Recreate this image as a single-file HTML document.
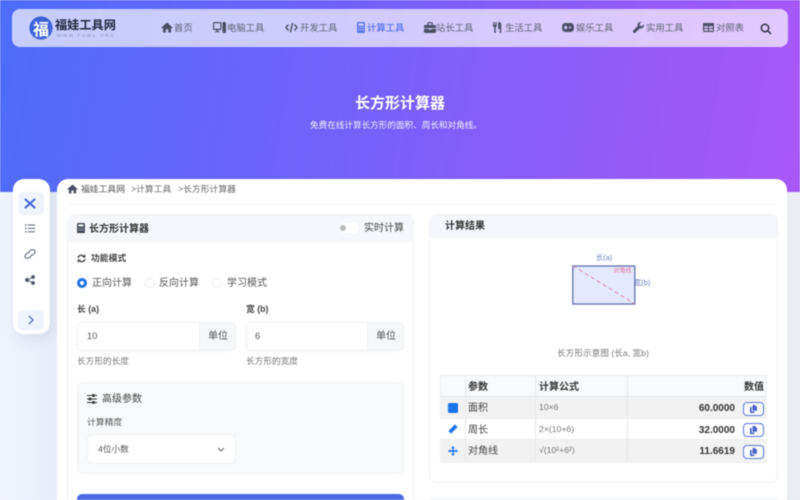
<!DOCTYPE html>
<html lang="zh-CN">
<head>
<meta charset="utf-8">
<title>长方形计算器</title>
<style>
*{box-sizing:border-box;margin:0;padding:0}
html,body{width:800px;height:500px;overflow:hidden;background:#edf1f9}
body{font-family:"Liberation Sans","Noto Sans CJK SC",sans-serif;color:#333}
#root{position:absolute;left:0;top:0;width:800px;height:500px;overflow:hidden;filter:blur(.4px);background:linear-gradient(90deg,#f1f4fd 0,#e8ecf6 60px,#e8ecf6 100%)}
.a{position:absolute}
.t{position:absolute;white-space:nowrap;line-height:1}
svg{position:absolute;display:block}
.n{font-size:9.33px;color:#5f6376;top:23.5px}
.nv{fill:#4b5065}
</style>
</head>
<body>
<div id="root">
<div class="a" style="left:0;top:0;width:800px;height:192px;background:linear-gradient(100deg,#4d6df8 0%,#7a60fb 50%,#a957f8 100%)"></div>
<div class="a" style="left:787px;top:192px;width:13px;height:308px;background:#e9edf2"></div>

<!-- nav -->
<div class="a" style="left:12px;top:9px;width:776px;height:38px;border-radius:8px;background:rgba(255,255,255,.67)"></div>
<svg style="left:29px;top:16px" width="24" height="24" viewBox="0 0 24 24"><circle cx="12" cy="12" r="11.6" fill="#3f63d9"/></svg>
<div class="t" style="left:33px;top:20px;font-size:16px;font-weight:700;color:#fff;font-family:'Noto Sans CJK SC',sans-serif">福</div>
<div class="t" style="left:55px;top:19px;font-size:12.2px;font-weight:700;color:#1f2740">福娃工具网</div>
<div class="t" style="left:57px;top:33.5px;font-size:4.6px;letter-spacing:1.6px;color:#8c92aa">WWW.FUWA.ORG</div>

<svg style="left:161px;top:22px" width="12" height="11" viewBox="0 0 12 11"><path class="nv" d="M6 .5 .3 5.6l.7.8L2 5.6V10.500h2.800V7.200h2.400v3.300H10V5.600l1 .8.7-.8z"/></svg>
<div class="t n" style="left:174px">首页</div>
<svg style="left:213px;top:22px" width="13" height="11" viewBox="0 0 13 11"><path class="nv" d="M0 1a1 1 0 0 1 1-1h6.500a1 1 0 0 1 1 1v6a1 1 0 0 1-1 1H5v1.200h1.500v1H2v-1h1.500V8H1a1 1 0 0 1-1-1zm1.200.2v5.600h6.100V1.200zM9.500 1a1 1 0 0 1 1-1H12a1 1 0 0 1 1 1v9a1 1 0 0 1-1 1h-1.500a1 1 0 0 1-1-1z"/></svg>
<div class="t n" style="left:227px">电脑工具</div>
<svg style="left:285px;top:22px" width="13" height="11" viewBox="0 0 13 11" fill="none" stroke="#4b5065" stroke-width="1.400"><path d="M3.500 2.500.9 5.500l2.600 3M9.500 2.500l2.600 3-2.600 3M7.600.8 5.400 10.200"/></svg>
<div class="t n" style="left:300px">开发工具</div>
<svg style="left:357px;top:22px" width="8" height="11" viewBox="0 0 8 11"><path fill="#5a78e6" fill-rule="evenodd" d="M1 0h6a1 1 0 0 1 1 1v9a1 1 0 0 1-1 1H1a1 1 0 0 1-1-1V1a1 1 0 0 1 1-1zm.4 1.400v2.400h5.200V1.400zM1.400 5v1.100h1.200V5zm2 0v1.100h1.200V5zm2 0v1.100h1.200V5zM1.400 7.200v1.100h1.200V7.200zm2 0v1.100h1.200V7.200zm2 0v1.100h1.200V7.200z"/></svg>
<div class="t n" style="left:367px;color:#4f70e8;font-weight:500">计算工具</div>
<svg style="left:424px;top:22px" width="12" height="11" viewBox="0 0 12 11"><path class="nv" d="M3.300 3V1.500C3.300.700 4 0 4.800 0h2.400c.8 0 1.500.7 1.500 1.500V3H11c.6 0 1 .4 1 1v2H0V4c0-.6.4-1 1-1zm1.200 0h3V1.200h-3zM0 6.800h4.800v1h2.400v-1H12V10a1 1 0 0 1-1 1H1a1 1 0 0 1-1-1z"/></svg>
<div class="t n" style="left:436px">站长工具</div>
<svg style="left:493px;top:22px" width="9" height="11" viewBox="0 0 9 11"><path class="nv" d="M0 0h.8v2.800h.7V0h.8v2.800H3V0h.8v3.800c0 .7-.5 1.200-1.100 1.300V11H1.200V5.100C.5 5 0 4.500 0 3.800zM6 0h.4c1 0 1.800.8 1.800 2v9H6.700V7H6c-.5 0-.8-.3-.8-.8V2c0-1 .3-2 .8-2z"/></svg>
<div class="t n" style="left:505px">生活工具</div>
<svg style="left:562px;top:23px" width="12" height="9" viewBox="0 0 12 9"><path class="nv" fill-rule="evenodd" d="M3.500 0h5a3.500 3.500 0 0 1 3.500 3.500v2A3.500 3.500 0 0 1 8.500 9h-5A3.500 3.500 0 0 1 0 5.500v-2A3.500 3.500 0 0 1 3.500 0zM3 2.800v1H2v1.400h1v1h1.400v-1h1V3.800h-1v-1zM8 3.500a1 1 0 1 0 0 2 1 1 0 0 0 0-2z"/></svg>
<div class="t n" style="left:576px">娱乐工具</div>
<svg style="left:633px;top:22px" width="11" height="11" viewBox="0 0 11 11"><path class="nv" d="M10.800 2.400 9 4.200 7 3.800l-.4-2L8.400 0C6.900-.3 5.300.4 4.800 1.800c-.3.700-.3 1.500 0 2.200L.4 8.400a1.400 1.400 0 0 0 2.100 2.100L6.900 6.200c2.300.8 4.600-1.100 3.900-3.800z"/></svg>
<div class="t n" style="left:646px">实用工具</div>
<svg style="left:703px;top:23px" width="11" height="9" viewBox="0 0 11 9"><path class="nv" fill-rule="evenodd" d="M1 0h9a1 1 0 0 1 1 1v7a1 1 0 0 1-1 1H1a1 1 0 0 1-1-1V1a1 1 0 0 1 1-1zm.2 3.200v1.700H5V3.200zm4.800 0v1.700h3.800V3.200zM1.200 5.900v1.900H5V5.900zm4.800 0v1.900h3.800V5.900z"/></svg>
<div class="t n" style="left:716px">对照表</div>
<svg style="left:760px;top:23px" width="12" height="12" viewBox="0 0 12 12" fill="none" stroke="#2f3447" stroke-width="1.500"><circle cx="5" cy="5" r="3.700"/><path d="m7.800 7.800 3.200 3.200"/></svg>

<!-- hero -->
<div class="t" style="left:355px;top:96px;font-size:15px;font-weight:700;color:#fff">长方形计算器</div>
<div class="t" style="left:310px;top:121px;font-size:8.6px;color:#eef0ff">免费在线计算长方形的面积、周长和对角线。</div>

<!-- sidebar -->
<div class="a" style="left:13px;top:179px;width:37px;height:155px;border-radius:11px;background:#fff;box-shadow:4px 5px 14px rgba(90,110,170,.14)"></div>
<div class="a" style="left:18px;top:192px;width:26px;height:23px;border-radius:5px;background:#eff3fd"></div>
<svg style="left:24px;top:198px" width="12" height="11" viewBox="0 0 12 11" fill="none" stroke="#4668dc" stroke-width="2.100" stroke-linecap="round"><path d="M1.500 1.500 10.500 9.500M10.500 1.500 1.500 9.500"/></svg>
<svg style="left:25px;top:224px" width="10" height="9" viewBox="0 0 10 9" fill="#5a5f70"><path d="M0 .4h1.500v1.300H0zM2.800.5H10v1H2.800zM0 3.800h1.500v1.300H0zM2.800 3.900H10v1H2.800zM0 7.200h1.500v1.300H0zM2.800 7.300H10v1H2.800z"/></svg>
<svg style="left:24px;top:249px" width="12" height="10" viewBox="0 0 12 10" fill="none" stroke="#5a5f70" stroke-width="1"><path d="M4.800 3.200C6 1.500 8 .4 9.800.9c1.500.5 1.800 2 .7 3.300C9.400 5.600 7.800 6.400 6.600 6.200M7.200 6.800C6 8.500 4 9.600 2.200 9.100.7 8.600.4 7.100 1.500 5.800 2.600 4.400 4.200 3.600 5.400 3.800"/></svg>
<svg style="left:25px;top:275px" width="10" height="10" viewBox="0 0 10 10" fill="#4b5065" stroke="#4b5065" stroke-width=".9"><circle cx="2" cy="5" r="1.500"/><circle cx="8" cy="2" r="1.400"/><circle cx="8" cy="8" r="1.400"/><path d="M2 5 8 2M2 5l6 3" fill="none"/></svg>
<div class="a" style="left:18px;top:310px;width:26px;height:20px;border-radius:5px;background:#eff3fd"></div>
<svg style="left:28px;top:315px" width="6" height="10" viewBox="0 0 6 10" fill="none" stroke="#5a6fb0" stroke-width="1.300"><path d="M1 1l4 4-4 4"/></svg>

<!-- main card -->
<div class="a" style="left:57px;top:179px;width:730px;height:321px;border-radius:11px 11px 0 0;background:#fff"></div>
<svg style="left:67px;top:184px" width="11" height="10" viewBox="0 0 12 11"><path class="nv" d="M6 .5 .3 5.600l.7.8L2 5.600V10.500h2.800V7.200h2.400v3.300H10V5.600l1 .8.7-.8z"/></svg>
<div class="t" style="left:81px;top:184.500px;font-size:8.8px;color:#555">福娃工具网</div>
<div class="t" style="left:131px;top:184.500px;font-size:8.8px;color:#666">&gt;计算工具</div>
<div class="t" style="left:178px;top:184.500px;font-size:8.8px;color:#666">&gt;长方形计算器</div>
<div class="a" style="left:67px;top:204px;width:710px;height:1px;background:#f6f7f9"></div>

<!-- left card -->
<div class="a" style="left:67px;top:214px;width:347px;height:286px;border-radius:8px 8px 0 0;border:1px solid #f1f3f6;border-bottom:0;background:#fff;overflow:hidden">
  <div class="a" style="left:0;top:0;width:100%;height:26.500px;background:#f5f7fc"></div>
</div>
<svg style="left:77px;top:222.500px" width="8" height="10.500" viewBox="0 0 8 11"><path fill="#2f3447" fill-rule="evenodd" d="M1 0h6a1 1 0 0 1 1 1v9a1 1 0 0 1-1 1H1a1 1 0 0 1-1-1V1a1 1 0 0 1 1-1zm.3 1.300v2.400h5.400V1.300zM1.300 5v1h1.300V5zm2.100 0v1h1.200V5zm2 0v1h1.300V5zM1.300 7.200v1.100h1.300V7.200zm2.100 0v1.100h1.200V7.200zm2 0v1.100h1.300V7.200z"/></svg>
<div class="t" style="left:89px;top:224.500px;font-size:10px;font-weight:700;color:#333">长方形计算器</div>
<div class="a" style="left:339px;top:223px;width:19.500px;height:10px;border-radius:5px;background:#fff"></div>
<div class="a" style="left:340px;top:225px;width:6px;height:6px;border-radius:3px;background:#bcbcbc"></div>
<div class="t" style="left:364px;top:224px;font-size:10px;color:#444">实时计算</div>

<svg style="left:76.500px;top:253.500px" width="9" height="9" viewBox="0 0 9 9" fill="none" stroke="#333" stroke-width="1.200"><path d="M1 4a3.500 3.500 0 0 1 6-1.600M8 5a3.500 3.500 0 0 1-6 1.600"/><path d="M7.900.6v2.400H5.500M1.100 8.400V6h2.400" stroke-width="1"/></svg>
<div class="t" style="left:91px;top:253.500px;font-size:8.8px;font-weight:700;color:#444">功能模式</div>

<div class="a" style="left:77px;top:278px;width:10px;height:10px;border-radius:50%;border:3px solid #1d70e8;background:#fff"></div>
<div class="t" style="left:92px;top:279px;font-size:10px;color:#555">正向计算</div>
<div class="a" style="left:145px;top:278px;width:10px;height:10px;border-radius:50%;border:1px solid #eceef1;background:#fff"></div>
<div class="t" style="left:159px;top:279px;font-size:10px;color:#555">反向计算</div>
<div class="a" style="left:212px;top:278px;width:10px;height:10px;border-radius:50%;border:1px solid #eceef1;background:#fff"></div>
<div class="t" style="left:227px;top:279px;font-size:10px;color:#555">学习模式</div>

<div class="t" style="left:77px;top:305px;font-size:8.8px;font-weight:700;color:#444">长 (a)</div>
<div class="t" style="left:246px;top:305px;font-size:8.8px;font-weight:700;color:#444">宽 (b)</div>

<div class="a" style="left:77px;top:322px;width:159px;height:29px;border-radius:5px;border:1px solid #f1f2f4;background:#fff;box-shadow:0 1px 2px rgba(0,0,0,.03)"></div>
<div class="a" style="left:199px;top:322px;width:37px;height:29px;border-radius:0 5px 5px 0;border:1px solid #f1f2f4;background:#f6f7f9"></div>
<div class="t" style="left:87px;top:331.500px;font-size:9.2px;color:#555">10</div>
<div class="t" style="left:208px;top:331.500px;font-size:10px;color:#555">单位</div>
<div class="a" style="left:246px;top:322px;width:158px;height:29px;border-radius:5px;border:1px solid #f1f2f4;background:#fff;box-shadow:0 1px 2px rgba(0,0,0,.03)"></div>
<div class="a" style="left:367px;top:322px;width:37px;height:29px;border-radius:0 5px 5px 0;border:1px solid #f1f2f4;background:#f6f7f9"></div>
<div class="t" style="left:255px;top:331.500px;font-size:9.2px;color:#555">6</div>
<div class="t" style="left:376px;top:331.500px;font-size:10px;color:#555">单位</div>
<div class="t" style="left:77px;top:356.500px;font-size:8.67px;color:#777">长方形的长度</div>
<div class="t" style="left:246px;top:356.500px;font-size:8.67px;color:#777">长方形的宽度</div>

<div class="a" style="left:77px;top:382px;width:327px;height:92px;border-radius:6px;border:1px solid #f0f1f3;background:#f8f9fa"></div>
<svg style="left:87px;top:394px" width="10" height="10" viewBox="0 0 10 10" stroke="#333" stroke-width="1" fill="#333"><path d="M0 1.500h10M0 5h10M0 8.500h10" fill="none"/><circle cx="6.500" cy="1.500" r="1"/><circle cx="3" cy="5" r="1"/><circle cx="6.500" cy="8.500" r="1"/></svg>
<div class="t" style="left:102px;top:394.500px;font-size:10px;color:#444">高级参数</div>
<div class="t" style="left:87px;top:417.500px;font-size:8.8px;color:#555">计算精度</div>
<div class="a" style="left:87px;top:434px;width:149px;height:30px;border-radius:6px;border:1px solid #f0f1f3;background:#fff"></div>
<div class="t" style="left:98px;top:444.500px;font-size:8.67px;color:#555">4位小数</div>
<svg style="left:217px;top:447px" width="8" height="5" viewBox="0 0 8 5" fill="none" stroke="#666" stroke-width="1"><path d="m1 1 3 3 3-3"/></svg>

<div class="a" style="left:77px;top:494px;width:327px;height:6px;border-radius:5px 5px 0 0;background:#4a6ae6"></div>

<!-- right card -->
<div class="a" style="left:429px;top:214px;width:349px;height:269px;border-radius:8px;border:1px solid #f1f3f6;background:#fff;overflow:hidden">
  <div class="a" style="left:0;top:0;width:100%;height:23px;background:#f5f7fc"></div>
</div>
<div class="t" style="left:445px;top:222px;font-size:10px;font-weight:700;color:#333">计算结果</div>

<svg style="left:555px;top:250px" width="105" height="60" viewBox="555 250 105 60">
  <rect x="572.800" y="266" width="62" height="38" fill="#e4e9fd" stroke="#6170ae" stroke-width="1.300"/>
  <path d="M573 266 635 304" stroke="#e2719c" stroke-width=".8" stroke-dasharray="4 3" fill="none"/>
  <text x="596" y="260" font-size="7.300" fill="#6f80bd" font-family="Liberation Sans,Noto Sans CJK SC,sans-serif">长(a)</text>
  <text x="613.500" y="272.500" font-size="6" fill="#e2719c" font-family="Liberation Sans,Noto Sans CJK SC,sans-serif">对角线</text>
  <text x="634" y="285" font-size="7.300" fill="#6f80bd" font-family="Liberation Sans,Noto Sans CJK SC,sans-serif">宽(b)</text>
</svg>
<div class="t" style="left:557px;top:348.500px;font-size:8.67px;color:#777">长方形示意图 (长a, 宽b)</div>

<!-- table -->
<div class="a" style="left:440px;top:375px;width:327px;height:22px;background:#f8f9fa;border:1px solid #eceef0;border-bottom-color:#e4e6e9"></div>
<div class="a" style="left:440px;top:397px;width:327px;height:22px;background:#f2f2f2"></div>
<div class="a" style="left:440px;top:419px;width:327px;height:21px;background:#fff;border-bottom:1px solid #eceef0"></div>
<div class="a" style="left:440px;top:440px;width:327px;height:22.500px;background:#f2f2f2"></div>
<div class="a" style="left:465px;top:375px;width:1px;height:87px;background:#e8e9eb"></div>
<div class="a" style="left:535px;top:375px;width:1px;height:87px;background:#e8e9eb"></div>
<div class="a" style="left:627px;top:375px;width:1px;height:87px;background:#e8e9eb"></div>

<div class="t" style="left:468px;top:382.500px;font-size:10px;font-weight:700;color:#333">参数</div>
<div class="t" style="left:539px;top:382.500px;font-size:10px;font-weight:700;color:#333">计算公式</div>
<div class="t" style="left:744px;top:382.500px;font-size:10px;font-weight:700;color:#333">数值</div>

<div class="a" style="left:448px;top:403px;width:9.500px;height:9.500px;border-radius:1.500px;background:#1a73e8"></div>
<svg style="left:448px;top:424px" width="10" height="10" viewBox="0 0 10 10"><path fill="#1a73e8" d="M7 .4 9.600 3 3 9.600.4 7z"/></svg>
<svg style="left:448px;top:446px" width="10" height="10" viewBox="0 0 10 10"><path fill="#1a73e8" d="M5 0 6.800 2H5.700v2.300H8V3.200L10 5 8 6.800V5.700H5.700V8h1.100L5 10 3.200 8h1.100V5.700H2v1.100L0 5l2-1.800v1.100h2.300V2H3.200z"/></svg>

<div class="t" style="left:468px;top:404px;font-size:10px;color:#444">面积</div>
<div class="t" style="left:468px;top:426px;font-size:10px;color:#444">周长</div>
<div class="t" style="left:468px;top:447px;font-size:10px;color:#444">对角线</div>
<div class="t" style="left:539px;top:403px;font-size:8.67px;color:#777">10×6</div>
<div class="t" style="left:539px;top:425px;font-size:8.67px;color:#777">2×(10+6)</div>
<div class="t" style="left:539px;top:446px;font-size:8.67px;color:#777">√(10²+6²)</div>
<div class="t" style="right:65px;top:403.500px;font-size:10px;font-weight:700;color:#333">60.0000</div>
<div class="t" style="right:65px;top:425.500px;font-size:10px;font-weight:700;color:#333">32.0000</div>
<div class="t" style="right:65px;top:446.500px;font-size:10px;font-weight:700;color:#333">11.6619</div>

<div class="a" style="left:743px;top:402px;width:21px;height:14px;border-radius:4px;border:1px solid #5f76d6;background:#fbfcff"></div>
<div class="a" style="left:743px;top:423px;width:21px;height:14px;border-radius:4px;border:1px solid #5f76d6;background:#fbfcff"></div>
<div class="a" style="left:743px;top:445px;width:21px;height:14px;border-radius:4px;border:1px solid #5f76d6;background:#fbfcff"></div>
<svg style="left:750px;top:405px" width="7" height="8" viewBox="0 0 7 8"><path fill="#4a63c8" d="M2.500 0H5l2 2v3.800H2.500zM0 2h1.700v4.500H4.500V8H0z"/></svg>
<svg style="left:750px;top:426px" width="7" height="8" viewBox="0 0 7 8"><path fill="#4a63c8" d="M2.500 0H5l2 2v3.800H2.500zM0 2h1.700v4.500H4.500V8H0z"/></svg>
<svg style="left:750px;top:448px" width="7" height="8" viewBox="0 0 7 8"><path fill="#4a63c8" d="M2.500 0H5l2 2v3.800H2.500zM0 2h1.700v4.500H4.500V8H0z"/></svg>

<div class="a" style="left:430px;top:498px;width:348px;height:2px;border-radius:6px 6px 0 0;border:1px solid #eef0f4;border-bottom:0;background:#fff"></div>
</div>
</body>
</html>
